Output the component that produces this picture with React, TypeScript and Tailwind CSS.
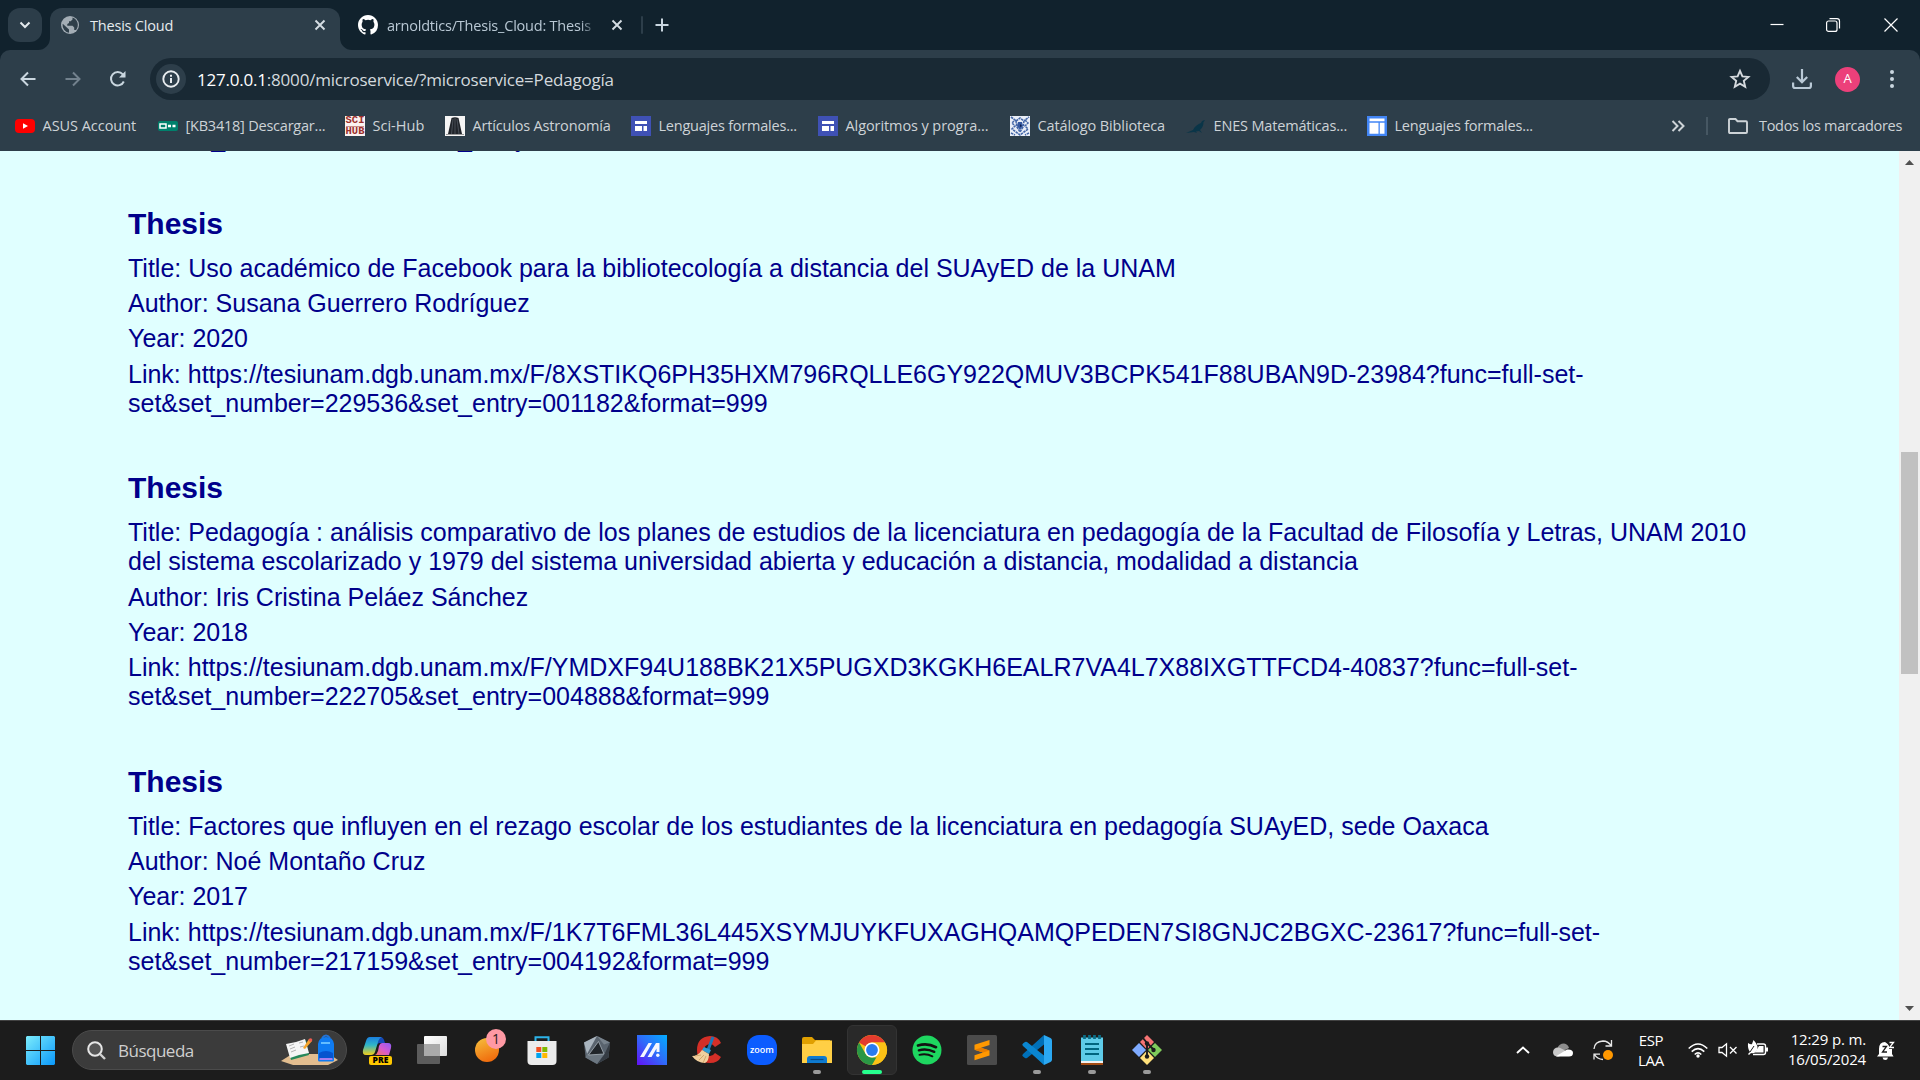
import React from "react";

type Box = { className?: string; children: React.ReactNode; vb?: string };
const Svg = ({ className = "", children, vb = "0 0 30 30" }: Box) => (
  <svg viewBox={vb} className={`block shrink-0 overflow-visible ${className}`} fill="none">
    {children}
  </svg>
);

/* ---------- Browser window ---------- */

const CloseX = () => (
  <Svg vb="0 0 12 12" className="h-3 w-3">
    <path d="M1.5 1.5l9 9M10.5 1.5l-9 9" stroke="#d5dde3" strokeWidth="1.9" />
  </Svg>
);

function TabStrip() {
  return (
    <div className="flex h-[50px] shrink-0 bg-[#11222d]">
      <div className="mt-2 ml-2 flex h-[34px] w-[34px] items-center justify-center rounded-xl bg-[#2c3d49]">
        <Svg vb="0 0 12 8" className="h-2 w-3">
          <path d="M1.5 1.5L6 6l4.500-4.500" stroke="#e3e9ed" strokeWidth="2" />
        </Svg>
      </div>
      <div className="relative mt-2 ml-2 flex h-[42px] w-[290px] items-center rounded-t-xl bg-[#2d3e4a] pb-2 pl-[11px]">
        <Svg vb="0 0 12 12" className="absolute bottom-0 -left-3 h-3 w-3">
          <path d="M12 0V12H0A12 12 0 0 0 12 0Z" fill="#2d3e4a" />
        </Svg>
        <Svg vb="0 0 12 12" className="absolute -right-3 bottom-0 h-3 w-3">
          <path d="M0 0V12H12A12 12 0 0 1 0 0Z" fill="#2d3e4a" />
        </Svg>
        <Svg vb="0 0 18 18" className="h-[18px] w-[18px]">
          <circle cx="9" cy="9" r="9" fill="#a3adb5" />
          <path d="M2 8l6 5.500v3.300A8 8 0 0 1 1.600 8zM11.500 1.600v2L9.700 5.300H8v1.800L6.300 8v1.700h5.200l1.700 1.700v2.500h1.900A7.800 7.800 0 0 0 11.500 1.600z" fill="#2f3f4a" />
        </Svg>
        <span className="mt-px ml-[11px] w-[224px] text-[14.5px] tracking-[-0.2px] whitespace-nowrap text-[#e6ebee]">Thesis Cloud</span>
        <CloseX />
      </div>
      <div className="ml-[18px] flex h-[50px] w-[283px] items-center">
        <Svg vb="0 0 16 16" className="h-5 w-5">
          <path fill="#fff" d="M8 0C3.580 0 0 3.580 0 8c0 3.540 2.290 6.530 5.470 7.590.4.070.55-.17.55-.38 0-.19-.01-.82-.01-1.490-2.010.37-2.530-.49-2.690-.94-.09-.23-.48-.94-.82-1.130-.28-.15-.68-.52-.01-.53.63-.01 1.080.58 1.230.82.72 1.210 1.870.87 2.330.66.07-.52.28-.87.51-1.070-1.780-.2-3.640-.89-3.640-3.950 0-.87.31-1.590.82-2.150-.08-.2-.36-1.020.08-2.120 0 0 .67-.21 2.200.82a7.600 7.600 0 0 1 4 0c1.530-1.040 2.200-.82 2.200-.82.44 1.100.16 1.920.08 2.120.51.56.82 1.270.82 2.150 0 3.070-1.870 3.750-3.650 3.950.29.25.54.73.54 1.480 0 1.070-.01 1.930-.01 2.200 0 .21.15.46.55.38A8.010 8.010 0 0 0 16 8c0-4.420-3.580-8-8-8z" />
        </Svg>
        <span className="mt-px ml-[9px] w-[210px] overflow-hidden mask-r-from-92% mask-r-to-100% text-[14.5px] tracking-[-0.21px] whitespace-nowrap text-[#b9c8d4]">arnoldtics/Thesis_Cloud: Thesis</span>
        <div className="ml-[14px]"><CloseX /></div>
      </div>
      <div className="mt-4 h-[18px] w-0.5 rounded bg-[#2d3e4a]" />
      <Svg vb="0 0 14 14" className="mt-[18px] ml-[12px] h-[14px] w-[14px]">
        <path d="M7 .5v13M.5 7h13" stroke="#c9d6df" strokeWidth="2" />
      </Svg>
      <div className="ml-auto flex items-start">
        <Svg vb="0 0 14 14" className="mt-[18px] mr-[42px] h-[14px] w-[14px]">
          <path d="M.5 6.500h13" stroke="#fff" strokeWidth="1.200" />
        </Svg>
        <Svg vb="0 0 14 14" className="mt-[18px] mr-[44px] h-[14px] w-[14px]">
          <rect x=".6" y="3" width="10.400" height="10.400" rx="2" stroke="#fff" strokeWidth="1.200" />
          <path d="M3.500 .6H11a2.500 2.500 0 0 1 2.500 2.500V10.500" stroke="#fff" strokeWidth="1.200" />
        </Svg>
        <Svg vb="0 0 14 14" className="mt-[18px] mr-[22px] h-[14px] w-[14px]">
          <path d="M.5 .5l13 13M13.500 .5l-13 13" stroke="#fff" strokeWidth="1.200" />
        </Svg>
      </div>
    </div>
  );
}

function Toolbar() {
  return (
    <div className="h-[52px] shrink-0 bg-[#11222d]">
      <div className="flex h-full items-start rounded-t-[10px] bg-[#2d3e4a] pt-2">
        <div className="flex h-[42px] w-[150px] items-center pl-5">
          <Svg vb="0 0 16 16" className="h-4 w-4">
            <path d="M15.500 8H2M8 1.500L1.500 8 8 14.500" stroke="#c9d6df" strokeWidth="2" />
          </Svg>
          <Svg vb="0 0 16 16" className="ml-[29px] h-4 w-4">
            <path d="M.5 8H14M8 1.500L14.500 8 8 14.500" stroke="#72818d" strokeWidth="2" />
          </Svg>
          <Svg vb="0 0 16 16" className="ml-[29px] h-4 w-4">
            <path d="M13.800 10.500A6.700 6.700 0 1 1 12.800 3.400L14.500 5.500" stroke="#c9d6df" strokeWidth="2" />
            <path d="M15.500 0v6.600H9z" fill="#c9d6df" />
          </Svg>
        </div>
        <div className="flex h-[42px] w-[1620px] items-center rounded-full bg-[#192934] pl-1.5">
          <div className="flex h-[30px] w-[30px] items-center justify-center rounded-full bg-[#2d3e4a]">
            <Svg vb="0 0 18 18" className="h-[18px] w-[18px]">
              <circle cx="9" cy="9" r="7.700" stroke="#e8ecef" strokeWidth="1.900" />
              <path d="M9 8v5M9 4.800v2" stroke="#e8ecef" strokeWidth="2" />
            </Svg>
          </div>
          <span className="mt-px ml-[11px] text-[17px] tracking-[-0.21px] whitespace-nowrap text-[#d3d9dd]">
            <span className="text-white">127.0.0.1</span>:8000/microservice/?microservice=Pedagogía
          </span>
          <Svg vb="0 0 24 24" className="mr-[18px] ml-auto h-6 w-6">
            <path d="M12 3.800l2.400 5.600 6 .5-4.600 4 1.400 5.900-5.200-3.100-5.200 3.100 1.400-5.900-4.600-4 6-.5z" stroke="#d5dade" strokeWidth="1.900" />
          </Svg>
        </div>
        <div className="flex h-[42px] items-center pl-[22px]">
          <Svg vb="0 0 20 20" className="h-5 w-5">
            <path d="M10 0v13M4.800 8l5.200 5.200L15.200 8" stroke="#b9c9d6" strokeWidth="2.200" />
            <path d="M1.100 13.500V17q0 2 2 2h13.800q2 0 2-2v-3.500" stroke="#b9c9d6" strokeWidth="2.200" />
          </Svg>
          <div className="ml-[23px] flex h-[25px] w-[25px] items-center justify-center rounded-full bg-[#ec407a] text-[13px] text-white">A</div>
          <Svg vb="0 0 4 20" className="ml-[30px] h-5 w-1">
            <circle cx="2" cy="3" r="2" fill="#c9d6df" />
            <circle cx="2" cy="10" r="2" fill="#c9d6df" />
            <circle cx="2" cy="17" r="2" fill="#c9d6df" />
          </Svg>
        </div>
      </div>
    </div>
  );
}

const SitesIcon = () => (
  <Svg vb="0 0 20 20" className="h-5 w-5">
    <rect width="20" height="20" fill="#3f51b5" />
    <path d="M4 5h12v3H4zM4 10h7v5H4zM12.500 10H16v5h-3.500z" fill="#fff" />
  </Svg>
);

const bookmarks = [
  {
    label: "ASUS Account",
    width: "w-[143px] tracking-[-0.04px]",
    icon: (
      <Svg vb="0 0 20 20" className="h-5 w-5">
        <rect y="3" width="20" height="14" rx="4" fill="#f00" />
        <path d="M8 7.200v5.600l5-2.800z" fill="#fff" />
      </Svg>
    ),
  },
  {
    label: "[KB3418] Descargar...",
    width: "w-[187px] tracking-[-0.22px]",
    icon: (
      <Svg vb="0 0 20 20" className="h-5 w-5">
        <rect y="5" width="20" height="10" rx="2" fill="#00806c" />
        <rect x="2" y="8" width="6" height="4" stroke="#fff" strokeWidth="1.500" />
        <path d="M10 10h3M14.500 10h3" stroke="#fff" strokeWidth="2.600" />
      </Svg>
    ),
  },
  {
    label: "Sci-Hub",
    width: "w-[100px] tracking-[0.02px]",
    icon: (
      <div className="flex h-5 w-5 shrink-0 flex-col items-center justify-between bg-[#fbf3f2] font-['Liberation_Mono'] text-[10.500px] leading-[9px] font-bold tracking-normal text-[#9c2f2c]">
        <span className="block h-[9.500px]">SCI</span>
        <span className="block h-[10px] border-t border-[#c98d8a]">HUB</span>
      </div>
    ),
  },
  {
    label: "Artículos Astronomía",
    width: "w-[186px] tracking-[-0.17px]",
    icon: (
      <Svg vb="0 0 20 20" className="h-5 w-5">
        <rect width="20" height="20" fill="#f5f5f5" />
        <path d="M6.500 2Q10 .5 13.500 2L17 18H3z" fill="#20242a" />
        <path d="M8 3L6.500 18M10 2v16M12 3l2 15" stroke="#596069" strokeWidth=".7" />
        <path d="M1 18.500h18" stroke="#999" />
      </Svg>
    ),
  },
  { label: "Lenguajes formales...", width: "w-[187px] tracking-[-0.22px]", icon: <SitesIcon /> },
  { label: "Algoritmos y progra...", width: "w-[192px] tracking-[-0.09px]", icon: <SitesIcon /> },
  {
    label: "Catálogo Biblioteca",
    width: "w-[176px] tracking-[-0.1px]",
    icon: (
      <Svg vb="0 0 20 20" className="h-5 w-5">
        <rect width="20" height="20" fill="#e9eef7" />
        <path d="M1 1l4 3-3 3 3 3-3 3 4 3 4 3 4-3 4-3-3-3 3-3-3-3 4-3M6 5l4-3 4 3-1 6-3 5-3-5zM1 17l4 2M19 17l-4 2" stroke="#4467a8" strokeWidth="1.600" strokeDasharray="2.500 .7" />
        <path d="M8 6h4l1 4-3 4-3-4z" fill="#3559a0" />
        <path d="M10 8l2 2-2 1z" fill="#0d1c4d" />
      </Svg>
    ),
  },
  {
    label: "ENES Matemáticas...",
    width: "w-[181px] tracking-[-0.17px]",
    icon: (
      <Svg vb="0 0 20 20" className="h-5 w-5">
        <path d="M0 17l7-3c2-4 5-6 8-7 1-2 2-3 4-2.500L17.500 6c0 4-1.500 6-3.500 8l2 3-3-2-3 .5 1 1.500-3-1z" fill="#0a3548" />
      </Svg>
    ),
  },
  {
    label: "Lenguajes formales...",
    width: "w-[187px] tracking-[-0.22px]",
    icon: (
      <Svg vb="0 0 20 20" className="h-5 w-5">
        <rect width="20" height="20" fill="#4285f4" />
        <path d="M2.500 2.500h15v2.800h-15zM2.500 6.800h9v11h-9zM12.800 6.800h4.700v11h-4.700z" fill="#fff" />
      </Svg>
    ),
  },
];

function BookmarksBar() {
  return (
    <div className="flex h-[49px] shrink-0 items-center bg-[#2d3e4a] pb-px pl-[15px] text-[14.5px] whitespace-nowrap text-[#cdd3d7]">
      {bookmarks.map((b, i) => (
        <div key={i} className={`flex shrink-0 items-center gap-[7.500px] ${b.width}`}>
          {b.icon}
          <span>{b.label}</span>
        </div>
      ))}
      <div className="ml-auto flex items-center pr-[18px]">
        <Svg vb="0 0 14 12" className="h-3 w-[14px]">
          <path d="M1.500 1l5 5-5 5M7.500 1l5 5-5 5" stroke="#cdd3d7" strokeWidth="2" />
        </Svg>
        <div className="ml-[21px] h-[18px] w-0.5 bg-[#465763]" />
        <Svg vb="0 0 20 16" className="ml-[20px] h-4 w-5">
          <path d="M1 2q0-1 1-1h5.500l2 2.200H18q1 0 1 1V14q0 1-1 1H2q-1 0-1-1z" stroke="#cdd3d7" strokeWidth="1.900" />
        </Svg>
        <span className="ml-[11px] w-[143px] tracking-[-0.3px]">Todos los marcadores</span>
      </div>
    </div>
  );
}

/* ---------- Page ---------- */

type Thesis = { title: string; author: string; year: string; link: string[] };

const theses: Thesis[] = [
  {
    title: "Uso académico de Facebook para la bibliotecología a distancia del SUAyED de la UNAM",
    author: "Susana Guerrero Rodríguez",
    year: "2020",
    link: [
      "https://tesiunam.dgb.unam.mx/F/8XSTIKQ6PH35HXM796RQLLE6GY922QMUV3BCPK541F88UBAN9D-23984?func=full-set-",
      "set&set_number=229536&set_entry=001182&format=999",
    ],
  },
  {
    title:
      "Pedagogía : análisis comparativo de los planes de estudios de la licenciatura en pedagogía de la Facultad de Filosofía y Letras, UNAM 2010 del sistema escolarizado y 1979 del sistema universidad abierta y educación a distancia, modalidad a distancia",
    author: "Iris Cristina Peláez Sánchez",
    year: "2018",
    link: [
      "https://tesiunam.dgb.unam.mx/F/YMDXF94U188BK21X5PUGXD3KGKH6EALR7VA4L7X88IXGTTFCD4-40837?func=full-set-",
      "set&set_number=222705&set_entry=004888&format=999",
    ],
  },
  {
    title: "Factores que influyen en el rezago escolar de los estudiantes de la licenciatura en pedagogía SUAyED, sede Oaxaca",
    author: "Noé Montaño Cruz",
    year: "2017",
    link: [
      "https://tesiunam.dgb.unam.mx/F/1K7T6FML36L445XSYMJUYKFUXAGHQAMQPEDEN7SI8GNJC2BGXC-23617?func=full-set-",
      "set&set_number=217159&set_entry=004192&format=999",
    ],
  },
];

function Page() {
  return (
    <div className="flex h-[869px] shrink-0 bg-[#e0ffff]">
      <main className="w-[1899px] overflow-hidden pr-[128px] pl-[128px] font-['Liberation_Sans',Arial,sans-serif] text-[25px] leading-[29px] text-[#00008b]">
        <p className="-mt-[27px] mb-[50px] whitespace-nowrap">set&amp;set_number=229536&amp;set_entry=001181&amp;format=999</p>
        {theses.map((t) => (
          <article key={t.author} className="mb-[49.900px]">
            <h2 className="mb-[12.850px] pt-1 text-[30px] leading-[34px] font-bold">Thesis</h2>
            <div className="flex flex-col gap-[6.250px]">
              <p>Title: {t.title}</p>
              <p>Author: {t.author}</p>
              <p>Year: {t.year}</p>
              <p className="whitespace-nowrap">
                Link: {t.link[0]}
                <br />
                {t.link[1]}
              </p>
            </div>
          </article>
        ))}
      </main>
      <div className="flex w-[21px] flex-col items-center bg-[#f0f0f0]">
        <Svg vb="0 0 9 5" className="mt-[9px] h-[5px] w-[9px]">
          <path d="M0 5L4.500 0 9 5z" fill="#505050" />
        </Svg>
        <div className="mt-[287px] h-[222px] w-[17px] shrink-0 bg-[#c1c1c1]" />
        <Svg vb="0 0 9 5" className="mt-auto mb-[9px] h-[5px] w-[9px]">
          <path d="M0 0L4.500 5 9 0z" fill="#505050" />
        </Svg>
      </div>
    </div>
  );
}

/* ---------- Taskbar ---------- */

const I = "h-[30px] w-[30px]";

const apps: { name: string; icon: React.ReactNode; state?: "open" | "active" }[] = [
  {
    name: "copilot",
    icon: (
      <div className="relative">
        <Svg className={I}>
          <defs>
            <linearGradient id="cpA" x1="0" y1="0" x2="0" y2="1">
              <stop stopColor="#1b7fe0" />
              <stop offset=".45" stopColor="#2fb6c8" />
              <stop offset="1" stopColor="#f3cf1a" />
            </linearGradient>
            <linearGradient id="cpB" x1="1" y1="0" x2="0" y2="1">
              <stop stopColor="#8d5cf5" />
              <stop offset=".5" stopColor="#d65ad0" />
              <stop offset="1" stopColor="#f7745f" />
            </linearGradient>
          </defs>
          <path d="M18 2q3 0 4 3l1 3h-5q-3 0-4 4l-2 5V2z" fill="#1649b8" />
          <path d="M8 2h12q-3 1-4 5l-3 10q-1 3-4 3H4Q0 20 1 15L4 6q1-4 4-4z" fill="url(#cpA)" />
          <path d="M20 8h6q4 0 3 5l-2 7H13q2-1 3-4l1-5q1-3 3-3z" fill="url(#cpB)" />
        </Svg>
        <div className="absolute top-[21px] left-[7px] flex h-[9px] w-[23px] items-center justify-center rounded-[2px] bg-[#ffc800] text-[8.500px] leading-none font-extrabold text-black">PRE</div>
      </div>
    ),
  },
  {
    name: "task view",
    icon: (
      <Svg className={I}>
        <defs>
          <linearGradient id="tvA" x1="0" y1="0" x2="1" y2="1">
            <stop stopColor="#fff" />
            <stop offset="1" stopColor="#dcdcdc" />
          </linearGradient>
        </defs>
        <rect x="7" y="1" width="23" height="20" rx="1" fill="url(#tvA)" />
        <rect x="0" y="9" width="23" height="20" rx="1" fill="#5c5c5c" />
        <rect x="7" y="9" width="16" height="12" fill="#aaa" />
      </Svg>
    ),
  },
  {
    name: "widgets",
    icon: (
      <div className="relative">
        <Svg className={I}>
          <defs>
            <linearGradient id="wg" x1=".2" y1="0" x2=".6" y2="1">
              <stop stopColor="#f5bb3a" />
              <stop offset="1" stopColor="#f06a0c" />
            </linearGradient>
          </defs>
          <circle cx="15" cy="15" r="12" fill="url(#wg)" />
        </Svg>
        <div className="absolute -top-[6px] left-[14px] flex h-5 w-5 items-center justify-center rounded-full bg-[#ff99a4] text-[14px] leading-none text-[#2a1a1c]">1</div>
      </div>
    ),
  },
  {
    name: "store",
    icon: (
      <Svg className={I}>
        <path d="M8.500 6V2.200h13V6" stroke="#2cb3e8" strokeWidth="2" />
        <path d="M.5 6h29v20q0 4-4 4h-21q-4 0-4-4z" fill="#ececec" />
        <rect x="9.300" y="12" width="5" height="5" fill="#f25022" />
        <rect x="15.300" y="12" width="5" height="5" fill="#7fba00" />
        <rect x="9.300" y="18" width="5" height="5" fill="#00a4ef" />
        <rect x="15.300" y="18" width="5" height="5" fill="#ffb900" />
      </Svg>
    ),
  },
  {
    name: "armoury",
    icon: (
      <Svg className={I}>
        <path d="M15 1l13 6.500-1.500 15L15 29 3.500 22.500 2 7.500z" fill="#59636e" />
        <path d="M15 1L2 7.500 5 19z" fill="#a9b4be" />
        <path d="M15 1l13 6.500-6 2z" fill="#77828c" />
        <path d="M28 7.500l-1.500 15L15 29l7-9z" fill="#353c44" />
        <path d="M5 19h17L15 29 3.500 22.500z" fill="#6b7680" />
        <path d="M16.500 6.500L22 19 6.500 20z" fill="#20252a" stroke="#a7b1ba" strokeWidth=".8" />
      </Svg>
    ),
  },
  {
    name: "myasus",
    icon: (
      <Svg className={I}>
        <defs>
          <linearGradient id="ma" x1="0" y1="1" x2="1" y2="0">
            <stop stopColor="#6410f5" />
            <stop offset=".5" stopColor="#2f6bfa" />
            <stop offset="1" stopColor="#02adff" />
          </linearGradient>
        </defs>
        <rect width="30" height="30" fill="url(#ma)" />
        <path d="M3 22l8.500-14H15L7 22zM10.500 22L19 8h3.500v9H19.500v-3.500L14.500 22z" fill="#f4f7ff" />
        <circle cx="20.800" cy="20.300" r="1.700" fill="#f4f7ff" />
      </Svg>
    ),
  },
  {
    name: "ccleaner",
    icon: (
      <Svg className={I}>
        <path d="M29 8Q26 1 18 1 5 2 5 15t13 13q8 0 11-6l-6-4q-2 3-5 3-6-1-6-6t6-6q3 0 5 3z" fill="#d42f27" />
        <path d="M21 2l-5 13" stroke="#1b78b8" strokeWidth="3" />
        <path d="M12 12l7 3-2 4-7-4z" fill="#2e9ad4" />
        <path d="M10 15l7 4q0 7-4 9-8 0-13-7 6 0 10-6z" fill="#f0cf9d" />
        <path d="M3 21l6-1M7 25l5-5M11 28l3-7" stroke="#c99b60" strokeWidth=".8" />
      </Svg>
    ),
  },
  {
    name: "zoom",
    icon: (
      <div className="flex h-[30px] w-[30px] items-center justify-center rounded-[12px] bg-[#0b5cff] pb-[2px] text-[9px] leading-none font-semibold text-white">zoom</div>
    ),
  },
  {
    name: "explorer",
    state: "open",
    icon: (
      <Svg className={I}>
        <path d="M0 4q0-2 2-2h8l3 3h15v8H0z" fill="#e0a000" />
        <path d="M0 9h11l3-3.500h16V28H0z" fill="#ffcf45" />
        <path d="M5 28v-4q0-3 3-3h14q3 0 3 3v4z" fill="#0f7bd0" />
        <path d="M8.500 24.500h13" stroke="#0b4b84" strokeWidth="1.200" />
      </Svg>
    ),
  },
  {
    name: "chrome",
    state: "active",
    icon: (
      <Svg className={I}>
        <circle cx="15" cy="15" r="15" fill="#fbc116" />
        <path d="M15 0A15 15 0 0 1 28 7.500H15A7.500 7.500 0 0 0 8.500 11.250L2 7.500A15 15 0 0 1 15 0z" fill="#e33b2e" />
        <path d="M2 7.500L8.500 18.750A7.500 7.500 0 0 0 15 22.500h6.500L15 30A15 15 0 0 1 2 7.500z" fill="#2a9745" />
        <path d="M21.500 18.750L15 30A15 15 0 0 0 28 7.500H15L21 11z" fill="#fbc116" />
        <circle cx="15" cy="15" r="7.500" fill="#fff" />
        <circle cx="15" cy="15" r="5.900" fill="#2a7bee" />
      </Svg>
    ),
  },
  {
    name: "spotify",
    icon: (
      <Svg className={I}>
        <circle cx="15" cy="15" r="14.500" fill="#1ed760" />
        <path d="M6 10.500q9.500-2.700 18 1.700" stroke="#121212" strokeWidth="2.700" strokeLinecap="round" />
        <path d="M6.800 15.300q8-2.200 15.500 1.600" stroke="#121212" strokeWidth="2.300" strokeLinecap="round" />
        <path d="M7.400 19.800q7-1.700 13 1.500" stroke="#121212" strokeWidth="1.900" strokeLinecap="round" />
      </Svg>
    ),
  },
  {
    name: "sublime",
    icon: (
      <Svg className={I}>
        <rect width="30" height="30" rx="1.500" fill="#4b4b4b" />
        <path d="M7.500 9.800L22.500 5v5L14 12.800l8.500 2.600v5L7.500 25.200v-5l8.500-2.700-8.500-2.700z" fill="#ff9800" />
        <path d="M7.500 14.800l8.500 2.700 6.500-2.100-8.500-2.600z" fill="#e87d00" />
      </Svg>
    ),
  },
  {
    name: "vscode",
    state: "open",
    icon: (
      <Svg className={I}>
        <path d="M22 0L1 19q-1.500 1.500 0 2.500l2 1.500q1 .5 2 0L22 9.500z" fill="#0070b8" />
        <path d="M22 30L1 11q-1.500-1.500 0-2.500L3 7q1-.5 2 0l17 13.500z" fill="#0a86d1" />
        <path d="M22 0l6.500 3Q30 3.700 30 5.500v19q0 1.800-1.500 2.500L22 30z" fill="#2ba8f2" />
      </Svg>
    ),
  },
  {
    name: "notepad",
    state: "open",
    icon: (
      <Svg className={I}>
        <path d="M4 26h22v4H4z" fill="#a34b12" />
        <path d="M4 24h22v4H4z" fill="#f1f1f1" />
        <path d="M4 2.500h22V26H4z" fill="#5ecbe8" />
        <path d="M8 9h14M8 14h14M8 19h14" stroke="#00657f" strokeWidth="1.900" />
        <path d="M7.500 0v4M12.500 0v4M17.500 0v4M22.500 0v4" stroke="#0b6d86" strokeWidth="2.800" strokeLinecap="butt" />
      </Svg>
    ),
  },
  {
    name: "git",
    state: "open",
    icon: (
      <Svg className={I}>
        <path d="M15 0l7 7-7 7.500L8 7z" fill="#f77474" />
        <path d="M23 8l7 7-7 7-7-7z" fill="#80cc5b" />
        <path d="M15 15.500l7 7.500-7 7-7-7z" fill="#ffe07a" />
        <path d="M7 8l7 7-7 7-7-7z" fill="#7fabff" />
        <path d="M11 3l4 5v13M15 8l7 7" stroke="#1c1c1c" strokeWidth="1.900" />
        <circle cx="15" cy="8.500" r="2.200" fill="#1c1c1c" />
        <circle cx="15" cy="21.500" r="2.200" fill="#1c1c1c" />
        <circle cx="21.500" cy="15" r="2.200" fill="#1c1c1c" />
      </Svg>
    ),
  },
];

function TaskApp({ icon, state }: { icon: React.ReactNode; state?: "open" | "active" }) {
  return (
    <div className={`relative mr-[5px] flex h-[50px] w-[50px] items-center justify-center rounded-md ${state === "active" ? "border border-[#333] bg-[#292929]" : ""}`}>
      {icon}
      {state === "open" && <div className="absolute bottom-px left-[21px] h-1 w-2 rounded-full bg-[#9a9a9a]" />}
      {state === "active" && <div className="absolute bottom-0 left-[14px] h-1 w-5 rounded-full bg-[#26ff8e]" />}
    </div>
  );
}

function Taskbar() {
  return (
    <div className="flex h-[60px] shrink-0 items-center border-t border-[#424242] bg-[#1c1c1c] pb-px text-white">
      <Svg vb="0 0 29 29" className="ml-[26px] h-[29px] w-[29px]">
        <defs>
          <linearGradient id="win" gradientUnits="userSpaceOnUse" x1="0" y1="0" x2="29" y2="29">
            <stop stopColor="#7cecfb" />
            <stop offset="1" stopColor="#0a98fb" />
          </linearGradient>
        </defs>
        <path d="M1 0h13v14H0V1zM15 0h13l1 1v13H15zM0 15h14v14H1l-1-1zM15 15h14v13l-1 1H15z" fill="url(#win)" />
      </Svg>
      <div className="ml-[17px] flex h-10 w-[275px] items-center rounded-full border border-[#4b4b4b] bg-[#3b3b3b] pl-[14px]">
        <Svg vb="0 0 19 19" className="h-[19px] w-[19px]">
          <circle cx="8" cy="8" r="6.800" stroke="#e6e6e6" strokeWidth="2" fill="#555" />
          <path d="M13 13l5 5" stroke="#d0d0d0" strokeWidth="2.400" />
        </Svg>
        <span className="mt-px ml-[12px] w-[163px] text-[17px] tracking-[-0.5px] text-[#cfcfcf]">Búsqueda</span>
        <Svg vb="0 0 58 31" className="h-[31px] w-[58px]">
          <path d="M0 26l11-7h37l9 6-10 5H12z" fill="#e2bd8f" />
          <path d="M6 10l4 15 18-5-3-15-9 3z" fill="#26885a" />
          <path d="M5 9l4 14 9-3-3-13zM15 7l9-3 4 14-10 2z" fill="#f5f5f5" />
          <path d="M8 11l5-2M9 14l5-2M10 17l5-2M18 8l4-1M19 12l4-1" stroke="#b2b2b2" />
          <path d="M22 13l6-9 3 2-7 8z" fill="#f6a52c" />
          <circle cx="29.500" cy="5" r="1.800" fill="#ef5b50" />
          <path d="M41 3q4-5 8 0" stroke="#2473d6" strokeWidth="2" />
          <path d="M37 25V9q1-7 8-7t8 7v16q0 1.500-1.500 1.500h-13q-1.500 0-1.500-1.500z" fill="#0f7bf2" />
          <path d="M38 18q7-4 14 0v6H38z" fill="#0754cf" />
          <path d="M40 8h9" stroke="#64bdff" strokeWidth="2" />
          <path d="M38.500 24h13" stroke="#b983f2" strokeWidth="1.800" />
        </Svg>
      </div>
      <div className="ml-[5px] flex">
        {apps.map((a) => (
          <TaskApp key={a.name} icon={a.icon} state={a.state} />
        ))}
      </div>
      <div className="ml-auto flex items-center">
        <Svg vb="0 0 14 8" className="mr-[23px] h-2 w-[14px]">
          <path d="M1 7l6-5.500L13 7" stroke="#fff" strokeWidth="1.900" />
        </Svg>
        <Svg vb="0 0 20 14" className="mr-5 h-[14px] w-5">
          <path d="M4.500 5Q6 .5 11 .5q4 .5 5 4.500l-6 3z" fill="#8d8d8d" />
          <path d="M4 13.500q-4-.5-4-4.500 .5-4.500 5-4.500 3 0 9 4.500l-8 4.500z" fill="#c8c8c8" />
          <path d="M3 13.200L14 6.500q6-.5 6 3.500 0 3.500-4 3.500H4z" fill="#fff" />
        </Svg>
        <Svg vb="0 0 20 20" className="h-5 w-5">
          <path d="M1 9Q1.500 1.500 10 1q5 0 8.500 5M18.500 0v6h-6" stroke="#e8e8e8" strokeWidth="1.300" />
          <path d="M1 19.500v-5.300h6M1.500 14.500Q4 19 10 19.500" stroke="#e8e8e8" strokeWidth="1.300" />
          <circle cx="15" cy="15" r="5" fill="#ff9800" />
        </Svg>
        <div className="ml-[18px] w-10 text-center text-[15px] leading-5 tracking-[-0.3px]">
          ESP
          <br />
          LAA
        </div>
        <Svg vb="0 0 20 15" className="ml-[17px] h-[15px] w-5">
          <path d="M.7 5.500Q10-3.500 19.300 5.500M3.700 8.600q6.300-6 12.600 0M6.700 11.500q3.300-3.200 6.600 0" stroke="#fff" strokeWidth="1.500" />
          <circle cx="10" cy="13" r="1.700" fill="#fff" />
        </Svg>
        <Svg vb="0 0 20 14" className="ml-[10px] h-[14px] w-5">
          <path d="M1 4.500h3L8.500 .8v12.400L4 9.500H1z" stroke="#fff" strokeWidth="1.300" />
          <path d="M12 4l6.500 6.500M18.500 4L12 10.500" stroke="#fff" strokeWidth="1.300" />
        </Svg>
        <Svg vb="0 0 20 16" className="mb-1 ml-[10px] h-4 w-5">
          <path d="M9 4h6.500q2 0 2 2v6.500q0 2-2 2H5" stroke="#fff" strokeWidth="1.400" />
          <path d="M11 6h4.500v6.500H7z M18 7.500h2v4h-2z" fill="#fff" />
          <path d="M5.500 0Q11 6 9 10q-2 4-6 3l-2 2-1-1 2-2Q-.5 9 0 3q3 2 4 1z" fill="#fff" />
          <path d="M2 12l4-6" stroke="#1c1c1c" />
        </Svg>
        <div className="-mt-[3px] ml-[12px] w-[86px] text-right text-[15px] leading-5 tracking-[-0.15px] whitespace-nowrap">
          12:29 p. m.
          <br />
          16/05/2024
        </div>
        <Svg vb="0 0 18 19" className="mr-[25px] ml-[11px] h-[19px] w-[18px]">
          <path d="M2 13V8q0-7 6-7l7 5v7l1.500 2.500H0zM5.500 16.500h5.500q-.5 2.500-2.700 2.500-2.300 0-2.800-2.500z" fill="#fff" />
          <path d="M5.500 5.500h4L5.500 11h4.500" stroke="#1c1c1c" strokeWidth="1.300" />
          <path d="M9 0h9v8h-6v-3z" fill="#1c1c1c" />
          <path d="M12.500 1.500h4L12.500 6.500H17" stroke="#fff" strokeWidth="1.300" />
        </Svg>
      </div>
    </div>
  );
}

export default function App() {
  return (
    <div className="flex h-[1080px] w-[1920px] flex-col overflow-hidden font-['Open_Sans','Noto_Sans',sans-serif]">
      <TabStrip />
      <Toolbar />
      <BookmarksBar />
      <Page />
      <Taskbar />
    </div>
  );
}
